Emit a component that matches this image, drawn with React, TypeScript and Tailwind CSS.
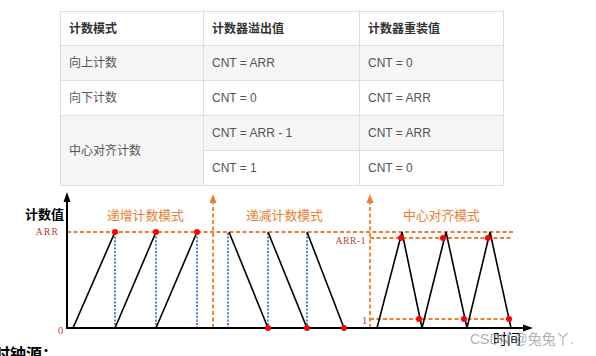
const ORANGE = '#ed7d31'
const BLUE = '#4472c4'

const rows = [
  { mode: '向上计数', overflow: 'CNT = ARR', reload: 'CNT = 0', shade: true },
  { mode: '向下计数', overflow: 'CNT = 0', reload: 'CNT = ARR', shade: false },
]

// black ramps, [x1, y1, x2, y2]
const RAMPS = [
  [73, 327, 115, 231], [115, 327, 156, 231], [156, 327, 197, 231],
  [229, 231, 268, 327], [268, 231, 307, 327], [307, 231, 344, 327],
]

function Chart() {
  const blueLines = [115, 156, 197, 228, 268, 307]
  return (
    <svg width="596" height="158" viewBox="0 185 596 158" className="block">
      {/* dashed guides */}
      <line x1="67" y1="231" x2="515" y2="231" stroke={ORANGE} strokeWidth="1.8" strokeDasharray="4 2.5" />
      <line x1="370" y1="237" x2="512" y2="237" stroke={ORANGE} strokeWidth="1.8" strokeDasharray="4 2.5" />
      <line x1="370" y1="318" x2="513" y2="318" stroke={ORANGE} strokeWidth="1.8" strokeDasharray="4 2.5" />
      {[213, 370].map((x) => (
        <g key={x}>
          <line x1={x} y1="327" x2={x} y2="200" stroke={ORANGE} strokeWidth="1.8" strokeDasharray="4 2.5" />
          <polygon points={`${x},193 ${x - 3.5},202 ${x + 3.5},202`} fill={ORANGE} />
        </g>
      ))}
      {blueLines.map((x) => (
        <line key={x} x1={x} y1="232" x2={x} y2="326" stroke={BLUE} strokeWidth="1.8" strokeDasharray="2 1.6" />
      ))}

      {/* axes */}
      <line x1="67" y1="327" x2="67" y2="198" stroke="#000" strokeWidth="2" />
      <polygon points="67,191 63.5,201 70.5,201" fill="#000" />
      <line x1="66" y1="327" x2="525" y2="327" stroke="#000" strokeWidth="2" />
      <polygon points="533,327 523,323.5 523,330.5" fill="#000" />

      {RAMPS.map(([x1, y1, x2, y2]) => (
        <line key={`${x1}-${y1}`} x1={x1} y1={y1} x2={x2} y2={y2} stroke="#000" strokeWidth="1.6" />
      ))}
      {/* center aligned */}
      <polyline points="377,327 402,231 422,327 446,231 467,327 490,231 511,327" fill="none" stroke="#000" strokeWidth="1.6" />

      {[
        [115, 231], [156, 231], [197, 231],
        [268, 327], [307, 327], [344, 327],
        [401, 237], [419, 318], [443, 237], [464, 318], [488, 237], [509, 318],
      ].map(([cx, cy]) => (
        <circle key={`${cx}-${cy}`} cx={cx} cy={cy} r="3" fill="#ff0000" />
      ))}

      {/* labels */}
      <g fontFamily="'Liberation Serif', serif" fill="#c0392b">
        <text x="59" y="234" fontSize="9.5" letterSpacing="1.2" textAnchor="end">ARR</text>
        <text x="58" y="333" fontSize="10.5">0</text>
        <text x="366" y="243" fontSize="9.5" letterSpacing="0.6" textAnchor="end">ARR-1</text>
        <text x="362" y="323" fontSize="10.5">1</text>
      </g>
      <text x="25" y="218" fontSize="13" fontWeight="700" fill="#000" fontFamily="'Noto Sans CJK SC', sans-serif">计数值</text>
      <g fontSize="12.8" fill={ORANGE} fontFamily="'Noto Sans CJK SC', sans-serif">
        <text x="107" y="219">递增计数模式</text>
        <text x="246" y="219">递减计数模式</text>
        <text x="403" y="219">中心对齐模式</text>
      </g>
    </svg>
  )
}

export default function App() {
  return (
    <div
      className="relative w-[596px] h-[356px] overflow-hidden bg-white"
      style={{ fontFamily: "'Liberation Sans', 'Noto Sans CJK SC', sans-serif" }}
    >
      <table className="ml-[60px] mt-[11px] border-collapse text-[12px] text-[#555]">
        <thead>
          <tr className="h-[34px] bg-white">
            <th className="w-[143px] border border-[#dedede] pl-2 text-left font-bold text-[#333]">计数模式</th>
            <th className="w-[156px] border border-[#dedede] pl-2 text-left font-bold text-[#333]">计数器溢出值</th>
            <th className="w-[144px] border border-[#dedede] pl-2 text-left font-bold text-[#333]">计数器重装值</th>
          </tr>
        </thead>
        <tbody>
          {rows.map((r) => (
            <tr key={r.mode} className={`h-[35px] ${r.shade ? 'bg-[#f6f6f6]' : 'bg-white'}`}>
              <td className="border border-[#dedede] pl-2">{r.mode}</td>
              <td className="border border-[#dedede] pl-2">{r.overflow}</td>
              <td className="border border-[#dedede] pl-2">{r.reload}</td>
            </tr>
          ))}
          <tr className="h-[35px] bg-[#f6f6f6]">
            <td rowSpan={2} className="border border-[#dedede] pl-2 bg-[#f6f6f6]">中心对齐计数</td>
            <td className="border border-[#dedede] pl-2">CNT = ARR - 1</td>
            <td className="border border-[#dedede] pl-2">CNT = ARR</td>
          </tr>
          <tr className="h-[35px] bg-white">
            <td className="border border-[#dedede] pl-2">CNT = 1</td>
            <td className="border border-[#dedede] pl-2">CNT = 0</td>
          </tr>
        </tbody>
      </table>

      <Chart />

      <div className="-ml-[6px] mt-[3px] text-[16px] font-bold leading-none text-black">时钟源：</div>

      <div className="absolute left-[493px] top-[332px] text-[14px] leading-none text-black">时间</div>
      <div className="absolute left-[470px] top-[332px] text-[14px] leading-none text-[#9a9a9a]/80">CSDN @兔兔丫.</div>
    </div>
  )
}
